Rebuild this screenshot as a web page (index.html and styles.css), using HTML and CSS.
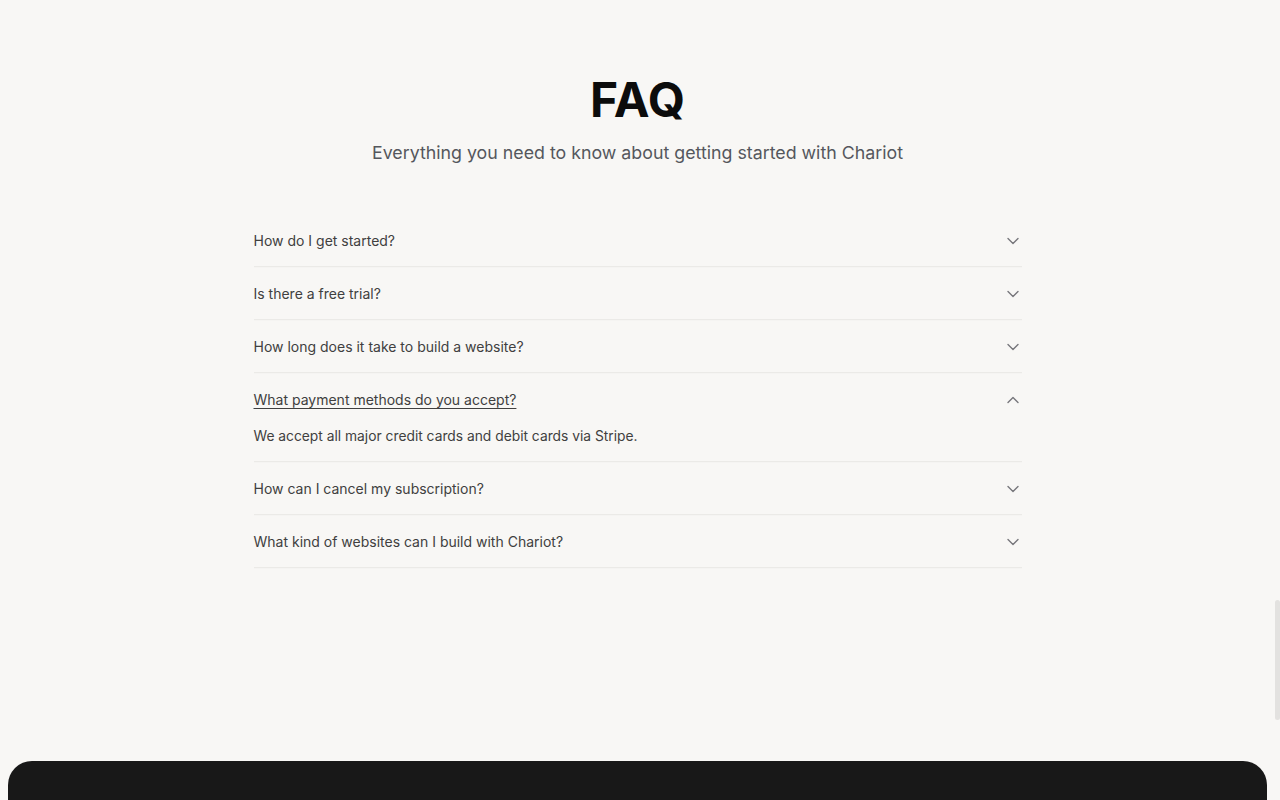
FILE: index.html
```html
<!DOCTYPE html>
<html lang="en">
<head>
<meta charset="UTF-8">
<meta name="viewport" content="width=device-width, initial-scale=1.0">
<title>FAQ - Chariot</title>
<link rel="stylesheet" href="styles.css">
</head>
<body>

<div class="page">
  <section class="faq">
    <h1 class="faq-title">FAQ</h1>
    <p class="faq-subtitle">Everything you need to know about getting started with Chariot</p>

    <div class="accordion">
      <details class="item">
        <summary>
          <span class="question">How do I get started?</span>
          <svg class="chevron" viewBox="0 0 24 24"><path d="m6 9 6 6 6-6"/></svg>
        </summary>
        <div class="answer">Sign up for an account, pick a template and start editing your site right away.</div>
      </details>
      <details class="item">
        <summary>
          <span class="question">Is there a free trial?</span>
          <svg class="chevron" viewBox="0 0 24 24"><path d="m6 9 6 6 6-6"/></svg>
        </summary>
        <div class="answer">Yes, you can try Chariot for free before choosing a plan.</div>
      </details>
      <details class="item">
        <summary>
          <span class="question">How long does it take to build a website?</span>
          <svg class="chevron" viewBox="0 0 24 24"><path d="m6 9 6 6 6-6"/></svg>
        </summary>
        <div class="answer">Most people publish their first site in under an hour.</div>
      </details>
      <details class="item" open>
        <summary>
          <span class="question">What payment methods do you accept?</span>
          <svg class="chevron" viewBox="0 0 24 24"><path d="m6 9 6 6 6-6"/></svg>
        </summary>
        <div class="answer">We accept all major credit cards and debit cards via Stripe.</div>
      </details>
      <details class="item">
        <summary>
          <span class="question">How can I cancel my subscription?</span>
          <svg class="chevron" viewBox="0 0 24 24"><path d="m6 9 6 6 6-6"/></svg>
        </summary>
        <div class="answer">You can cancel any time from your account settings.</div>
      </details>
      <details class="item">
        <summary>
          <span class="question">What kind of websites can I build with Chariot?</span>
          <svg class="chevron" viewBox="0 0 24 24"><path d="m6 9 6 6 6-6"/></svg>
        </summary>
        <div class="answer">Portfolios, landing pages, blogs, small business sites and more.</div>
      </details>
    </div>
  </section>

  <footer class="footer"></footer>
</div>

<div class="scroll-thumb"></div>

</body>
</html>
```

FILE: styles.css
```css
html, body {
  margin: 0;
  padding: 0;
}
body {
  font-family: Inter, 'Liberation Sans', Arial, sans-serif;
  background-color: #f8f7f5;
  color: #404040;
  overflow: hidden;
}
.page {
  width: 1275px; /* leaves room for the scrollbar */
}
.faq {
  padding: 72px 0 0;
  text-align: center;
}
.faq-title {
  margin: 0;
  font-size: 48px;
  line-height: 56px;
  font-weight: 700;
  color: #0c0c0c;
  letter-spacing: 0;
}
.faq-subtitle {
  margin: 11px 0 0;
  font-size: 17.8px;
  line-height: 28px;
  color: #55575d;
}
.accordion {
  width: 768px;
  margin: 47px auto 0;
  text-align: left;
}
.item {
  border-bottom: 1px solid #ebeae7;
  box-shadow: 0 1px 0 rgba(0, 0, 0, 0.012);
}
.item summary {
  list-style: none;
  display: flex;
  align-items: center;
  justify-content: space-between;
  padding: 17px 0 15px;
  cursor: pointer;
}
.item summary::-webkit-details-marker {
  display: none;
}
.question {
  font-size: 14px;
  line-height: 20px;
  color: #404040;
}
.item[open] .question {
  text-decoration: underline;
  text-underline-offset: 3px;
  text-decoration-thickness: 1px;
}
.chevron {
  width: 20px;
  height: 20px;
  margin-right: -1px;
  fill: none;
  stroke: #76767a;
  stroke-width: 1.6;
  stroke-linecap: round;
  stroke-linejoin: round;
  transition: transform 0.2s ease;
}
.item[open] .chevron {
  transform: rotate(180deg);
}
.answer {
  padding: 1px 0 15px;
  font-size: 13.8px;
  line-height: 20px;
  color: #404040;
}
.footer {
  margin: 193px 8px 0;
  height: 120px;
  background-color: #181818;
  border-radius: 24px 24px 0 0;
}
.scroll-thumb {
  position: fixed;
  right: 0;
  top: 600px;
  width: 5px;
  height: 120px;
  background-color: #e3e2e0;
  border-radius: 3px;
}
```
